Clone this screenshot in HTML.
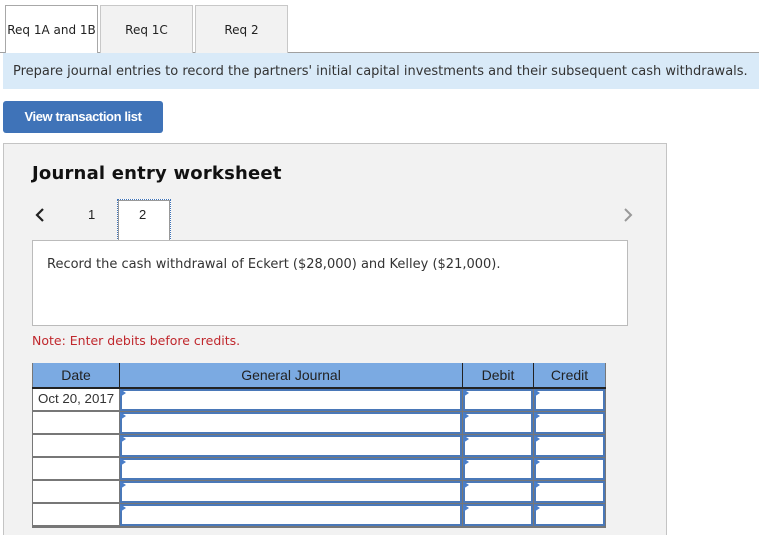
<!DOCTYPE html>
<html style="width:759px;height:535px;overflow:hidden"><head><style>
*{box-sizing:border-box;margin:0;padding:0}
body{width:759px;height:535px;background:#fff;position:relative;overflow:hidden;font-family:"DejaVu Sans","Liberation Sans",sans-serif;color:#222}
.a{position:absolute}
.tab{position:absolute;top:5px;height:48px;border:1px solid #c8c8c8;border-bottom:none;background:#f2f2f2;font-size:12px;text-align:center;line-height:48px;color:#222}
.th{position:absolute;top:363px;height:25px;background:#7baae2;border-right:1px solid #222;font:14px "Liberation Sans",sans-serif;text-align:center;line-height:24px;color:#222}
.cell{position:absolute;background:#fff}
.tri{position:absolute;width:0;height:0;border-top:4px solid transparent;border-bottom:4px solid transparent;border-left:6px solid #4a7ec8}
</style></head><body>
<div class="a" style="left:0;top:52px;width:759px;height:1px;background:#a0a0a0"></div>
<div class="tab" style="left:5px;width:93px;background:#fff;height:49px;border-color:#a8a8a8">Req 1A and 1B</div>
<div class="tab" style="left:100px;width:93px">Req 1C</div>
<div class="tab" style="left:195px;width:93px">Req 2</div>
<div class="a" style="left:3px;top:53px;width:756px;height:36px;background:#d9eaf8;font-size:13px;line-height:37px;padding-left:10px;color:#333">Prepare journal entries to record the partners' initial capital investments and their subsequent cash withdrawals.</div>
<div class="a" style="left:3px;top:101px;width:160px;height:32px;background:#3f73b8;border-radius:3px;color:#fff;font:bold 13px 'Liberation Sans',sans-serif;text-align:center;line-height:32px;letter-spacing:-0.4px">View transaction list</div>
<div class="a" style="left:3px;top:143px;width:664px;height:400px;background:#f2f2f2;border:1px solid #c4c4c4"></div>
<div class="a" style="left:32px;top:163px;font-size:18px;font-weight:bold;color:#111;letter-spacing:0.2px">Journal entry worksheet</div>
<svg class="a" style="left:34px;top:207px" width="12" height="16"><path d="M9 2L3 8l6 6" fill="none" stroke="#222" stroke-width="2.2"/></svg>
<div class="a" style="left:88px;top:207px;font:13px 'Liberation Sans',sans-serif">1</div>
<div class="a" style="left:117px;top:199px;width:54px;height:44px;background:#fff;border:1px dotted #3f73b8;outline:1px solid #999;outline-offset:-2px"></div>
<div class="a" style="left:139px;top:207px;font:13px 'Liberation Sans',sans-serif">2</div>
<svg class="a" style="left:622px;top:207px" width="12" height="16"><path d="M3 2l6 6-6 6" fill="none" stroke="#999" stroke-width="2"/></svg>
<div class="a" style="left:32px;top:240px;width:596px;height:86px;background:#fff;border:1px solid #bbb;font-size:13px;padding:16px 0 0 14px;color:#333">Record the cash withdrawal of Eckert ($28,000) and Kelley ($21,000).</div>
<div class="a" style="left:32px;top:333px;font-size:12.5px;color:#c0282d">Note: Enter debits before credits.</div>
<div class="a" style="left:32px;top:363px;width:574px;height:165px;background:#777"></div>
<div class="th" style="left:33px;width:87px">Date</div>
<div class="th" style="left:120px;width:343px">General Journal</div>
<div class="th" style="left:463px;width:71px">Debit</div>
<div class="th" style="left:534px;width:71px;border-right:none">Credit</div>
<div class="a" style="left:32px;top:387px;width:574px;height:2px;background:#222"></div>
<div id="rows"></div>
<script>
var h='';for(var i=0;i<6;i++){var y=389+i*23;
h+='<div class="cell" style="left:33px;top:'+y+'px;width:86px;height:21px;font:13.3px Liberation Sans,sans-serif;padding:2px 0 0 5px;color:#333">'+(i==0?'Oct 20, 2017':'')+'</div>';
[[120,342],[463,70],[534,71]].forEach(function(c){h+='<div class="cell" style="left:'+c[0]+'px;top:'+y+'px;width:'+c[1]+'px;height:22px;border:2px solid #4a78b8"></div><div class="tri" style="left:'+c[0]+'px;top:'+(y)+'px"></div>';});}
document.getElementById('rows').innerHTML=h;
</script>
</body></html>
